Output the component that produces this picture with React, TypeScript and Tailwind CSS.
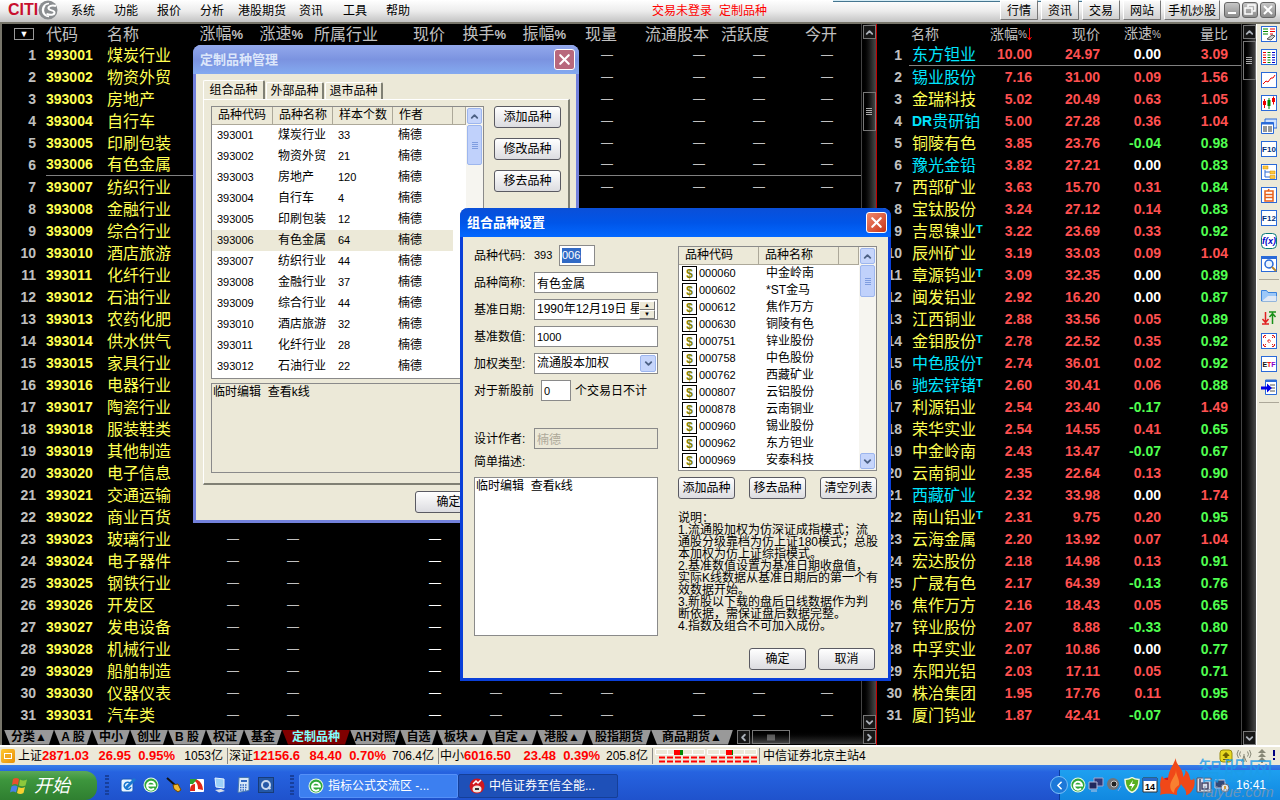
import React from 'react';
import { ChevronDown, ChevronLeft, ChevronRight, ChevronUp, X } from 'lucide-react';

const menus = [
  { name: '系统', w: 'w-[43px]' },
  { name: '功能', w: 'w-[43px]' },
  { name: '报价', w: 'w-[43px]' },
  { name: '分析', w: 'w-[38px]' },
  { name: '港股期货', w: 'w-[61px]' },
  { name: '资讯', w: 'w-[44px]' },
  { name: '工具', w: 'w-[43px]' },
  { name: '帮助', w: 'w-[43px]' },
];

const industries = [
  '煤炭行业', '物资外贸', '房地产', '自行车', '印刷包装', '有色金属', '纺织行业', '金融行业',
  '综合行业', '酒店旅游', '化纤行业', '石油行业', '农药化肥', '供水供气', '家具行业', '电器行业',
  '陶瓷行业', '服装鞋类', '其他制造', '电子信息', '交通运输', '商业百货', '玻璃行业', '电子器件',
  '钢铁行业', '开发区', '发电设备', '机械行业', '船舶制造', '仪器仪表', '汽车类',
];

// name, change %, price, speed %, volume ratio, flags (c = cyan name, t = T mark)
const stocks: [string, string, string, string, string, string][] = [
  ['东方钽业', '10.00', '24.97', '0.00', '3.09', 'c'],
  ['锡业股份', '7.16', '31.00', '0.09', '1.56', 'c'],
  ['金瑞科技', '5.02', '20.49', '0.63', '1.05', ''],
  ['DR贵研铂', '5.00', '27.28', '0.36', '1.04', 'c'],
  ['铜陵有色', '3.85', '23.76', '-0.04', '0.98', ''],
  ['豫光金铅', '3.82', '27.21', '0.00', '0.83', 'c'],
  ['西部矿业', '3.63', '15.70', '0.31', '0.84', ''],
  ['宝钛股份', '3.24', '27.12', '0.14', '0.83', ''],
  ['吉恩镍业', '3.22', '23.69', '0.33', '0.92', 't'],
  ['辰州矿业', '3.19', '33.03', '0.09', '1.04', ''],
  ['章源钨业', '3.09', '32.35', '0.00', '0.89', 't'],
  ['闽发铝业', '2.92', '16.20', '0.00', '0.87', ''],
  ['江西铜业', '2.88', '33.56', '0.05', '0.89', ''],
  ['金钼股份', '2.78', '22.52', '0.35', '0.92', 't'],
  ['中色股份', '2.74', '36.01', '0.02', '0.92', 'ct'],
  ['驰宏锌锗', '2.60', '30.41', '0.06', '0.88', 'ct'],
  ['利源铝业', '2.54', '23.40', '-0.17', '1.49', ''],
  ['荣华实业', '2.54', '14.55', '0.41', '0.65', ''],
  ['中金岭南', '2.43', '13.47', '-0.07', '0.67', ''],
  ['云南铜业', '2.35', '22.64', '0.13', '0.90', ''],
  ['西藏矿业', '2.32', '33.98', '0.00', '1.74', 'c'],
  ['南山铝业', '2.31', '9.75', '0.20', '0.95', 't'],
  ['云海金属', '2.20', '13.92', '0.07', '1.04', ''],
  ['宏达股份', '2.18', '14.98', '0.13', '0.91', ''],
  ['广晟有色', '2.17', '64.39', '-0.13', '0.76', ''],
  ['焦作万方', '2.16', '18.43', '0.05', '0.65', ''],
  ['锌业股份', '2.07', '8.88', '-0.33', '0.80', ''],
  ['中孚实业', '2.07', '10.86', '0.00', '0.77', ''],
  ['东阳光铝', '2.03', '17.11', '0.05', '0.71', ''],
  ['株冶集团', '1.95', '17.76', '0.11', '0.95', ''],
  ['厦门钨业', '1.87', '42.41', '-0.07', '0.66', ''],
];

const sampleCounts = ['33', '21', '120', '4', '12', '64', '44', '37', '44', '32', '28', '22'];

const members = [
  ['000060', '中金岭南'],
  ['000602', '*ST金马'],
  ['000612', '焦作万方'],
  ['000630', '铜陵有色'],
  ['000751', '锌业股份'],
  ['000758', '中色股份'],
  ['000762', '西藏矿业'],
  ['000807', '云铝股份'],
  ['000878', '云南铜业'],
  ['000960', '锡业股份'],
  ['000962', '东方钽业'],
  ['000969', '安泰科技'],
];

const sheetTabs = [
  { name: '分类▲', w: 'w-[50px]' },
  { name: 'A 股', w: 'w-[38px]' },
  { name: '中小', w: 'w-[38px]' },
  { name: '创业', w: 'w-[38px]' },
  { name: 'B 股', w: 'w-[38px]' },
  { name: '权证', w: 'w-[38px]' },
  { name: '基金', w: 'w-[38px]' },
  { name: '定制品种', w: 'w-[68px]', active: true },
  { name: 'AH对照', w: 'w-[50px]' },
  { name: '自选', w: 'w-[37px]' },
  { name: '板块▲', w: 'w-[50px]' },
  { name: '自定▲', w: 'w-[50px]' },
  { name: '港股▲', w: 'w-[50px]' },
  { name: '股指期货', w: 'w-[64px]' },
  { name: '商品期货▲', w: 'w-[82px]' },
];

const ratioColor = (v: string) => (parseFloat(v) >= 1 ? 'text-[#ff5050]' : 'text-[#50ff50]');

const speedColor = (v: string) => {
  if (v === '0.00') return 'text-white';
  return v.startsWith('-') ? 'text-[#50ff50]' : 'text-[#ff5050]';
};

const Logo = () => (
  <div className="flex w-[64px] shrink-0 items-center pl-2">
    <span className="text-base leading-5 font-black text-[#c8102e]">CITI</span>
    <svg viewBox="0 0 20 20" className="size-5 shrink-0" aria-hidden="true">
      <circle cx="10" cy="10" r="9.5" fill="#8a8d90" />
      <path d="M11 3.500a6.500 6.500 0 1 0 0 13M7 5.500a7 7 0 0 0 1 10" fill="none" stroke="#fff" strokeWidth="1.500" />
      <path d="M18 6c-4-1.500-8 .2-7.500 2.500s6 1.500 6 4-4 3-8 1.500" fill="none" stroke="#fff" strokeWidth="2" />
    </svg>
  </div>
);

const MenuBar = () => (
  <header className="relative flex h-6 shrink-0 items-start border-b-2 border-[#77756a] bg-linear-to-b from-white via-[#ececec] to-[#c4c4c4] text-xs">
    <Logo />
    <nav className="flex pl-[7px]">
      {menus.map((m) => (
        <button key={m.name} className={`${m.w} text-left leading-[22px] whitespace-nowrap`}>{m.name}</button>
      ))}
    </nav>
    <div className="flex flex-1 gap-[7px] pl-[223px] leading-[22px] whitespace-nowrap text-[#ff0000]">
      <span>交易未登录</span>
      <span>定制品种</span>
    </div>
    {/* edge of the auto-hidden connection bar */}
    <div className="absolute top-0 right-48 h-0.5 w-[255px] border-b border-[#44758f] bg-[#d5ecf5]" />
    <div className="flex gap-[3px] pr-1">
      {['行情', '资讯', '交易', '网站', '手机炒股'].map((b) => (
        <button
          key={b}
          className={`relative h-5 border border-t-white border-r-[#777] border-b-[#777] border-l-white bg-linear-to-b from-[#fafafa] to-[#d0d0d0] leading-5 whitespace-nowrap ${
            b.length > 2 ? 'px-[3px]' : 'px-[6px]'
          }`}
        >
          {b}
        </button>
      ))}
    </div>
    <div className="flex gap-0.5 pr-1 pt-0.5">
      {['最小化', '还原', '关闭'].map((b, i) => (
        <button key={b} aria-label={b} className="grid size-4 place-items-center rounded-[3px] border border-[#666] bg-linear-to-b from-[#c6c6c6] to-[#8c8c8c]">
          <svg viewBox="0 0 14 14" className="size-3.5" fill="none" stroke="#fff" strokeWidth="2" aria-hidden="true">
            {i === 0 && <path d="M3 10h8" />}
            {i === 1 && <path d="M5 4V2h7v6h-2M2 5h7v6H2z" strokeWidth="1.500" />}
            {i === 2 && <path d="M3 3l8 8M11 3l-8 8" />}
          </svg>
        </button>
      ))}
    </div>
  </header>
);

const DarkBtn = ({ dir }: { dir: 'up' | 'down' | 'left' | 'right' }) => {
  const Icon = { up: ChevronUp, down: ChevronDown, left: ChevronLeft, right: ChevronRight }[dir];
  return (
    <button aria-label={dir} className="grid h-[14px] w-[13px] shrink-0 place-items-center border border-[#777] bg-[#161616] text-[#aab0b8]">
      <Icon size={11} strokeWidth={4} />
    </button>
  );
};

const Grip = () => (
  <span className="flex flex-col gap-px">
    {[0, 1, 2, 3].map((i) => (
      <i key={i} className="block h-px w-1.5 bg-[#aaa]" />
    ))}
  </span>
);

const DarkScroll = ({ offset, thumb }: { offset: string; thumb: string }) => (
  <div className="flex w-[15px] shrink-0 flex-col items-center border-l border-[#444] bg-linear-to-r from-black to-[#4a4a4a] pt-px">
    <DarkBtn dir="up" />
    <div className="flex w-full flex-1 flex-col items-center">
      <div className={offset} />
      <div className={`${thumb} grid w-[13px] place-items-center border border-[#777] bg-linear-to-r from-black to-[#444]`}>
        <Grip />
      </div>
    </div>
    <DarkBtn dir="down" />
  </div>
);

const leftHeads = ['涨幅%', '涨速%', '所属行业', '现价', '换手%', '振幅%', '现量', '流通股本', '活跃度', '今开'];

const IndustryTable = () => (
  <table className="w-full table-fixed border-separate border-spacing-0 text-base whitespace-nowrap text-[#c0c0c0]">
    <colgroup>
      <col className="w-[44px]" />
      <col className="w-[61px]" />
      <col className="w-[76px]" />
      <col className="w-[60px]" />
      <col className="w-[60px]" />
      <col className="w-[75px]" />
      <col className="w-[67px]" />
      <col className="w-[61px]" />
      <col className="w-[60px]" />
      <col className="w-[51px]" />
      <col className="w-[92px]" />
      <col className="w-[60px]" />
      <col className="w-[68px]" />
      <col />
    </colgroup>
    <thead>
      <tr className="h-[19px] leading-[19px]">
        <th className="p-0">
          <button aria-label="筛选" className="ml-3 grid h-3 w-5 place-items-center border border-[#999] text-[9px] leading-none text-white">▼</button>
        </th>
        <th className="p-0 text-left font-normal">代码</th>
        <th className="p-0 text-left font-normal">名称</th>
        {leftHeads.map((h) => (
          <th key={h} className="p-0 text-right font-normal">
            {h.endsWith('%') ? <>{h.slice(0, 2)}<b className="text-[13px]">%</b></> : h}
          </th>
        ))}
        <th className="p-0" />
      </tr>
    </thead>
    <tbody>
      {industries.map((name, i) => {
        const line = i === 5 ? 'border-b border-[#808080]' : '';
        return (
          <tr key={name} className="h-[22px] leading-[21px]">
            <td className="p-0 pr-[10px] text-right text-sm leading-[21px] font-bold">{i + 1}</td>
            <td className={`p-0 text-sm leading-[21px] font-bold text-[#ffff54] ${line}`}>{393001 + i}</td>
            <td className={`p-0 text-[#ffff54] ${line}`}>{name}</td>
            {leftHeads.map((h) => (
              <td key={h} className={`p-0 pr-1 text-right text-xs leading-[21px] ${line} ${h === '现价' ? 'text-white' : ''}`}>
                {h === '所属行业' ? '' : '—'}
              </td>
            ))}
            <td className={`p-0 ${line}`} />
          </tr>
        );
      })}
    </tbody>
  </table>
);

const SheetTabs = () => (
  <div className="flex h-4 items-center pl-0.5">
    {sheetTabs.map((t) => (
      <button
        key={t.name}
        className={`${t.w} h-[15px] shrink-0 overflow-hidden text-xs leading-[15px] font-bold whitespace-nowrap [clip-path:polygon(0_0,100%_0,calc(100%-5px)_100%,6px_100%)] ${
          t.active ? 'bg-[#800000] text-[#80ffff]' : 'bg-[#999] text-black'
        }`}
      >
        {t.name}
      </button>
    ))}
    <div className="ml-1 flex flex-1 items-center gap-0.5 bg-linear-to-b from-black to-[#333]">
      <DarkBtn dir="left" />
      <div className="grid h-[14px] w-[38px] place-items-center border border-[#777] bg-linear-to-b from-black to-[#444]">
        <span className="rotate-90"><Grip /></span>
      </div>
      <div className="flex-1" />
      <DarkBtn dir="right" />
    </div>
  </div>
);

const StockTable = () => (
  <table className="w-full table-fixed border-separate border-spacing-0 text-base whitespace-nowrap">
    <colgroup>
      <col className="w-[32px]" />
      <col className="w-[72px]" />
      <col className="w-[51px]" />
      <col className="w-[68px]" />
      <col className="w-[61px]" />
      <col className="w-[67px]" />
      <col />
    </colgroup>
    <thead>
      <tr className="h-[19px] text-sm leading-[19px] text-[#c0c0c0]">
        <th className="p-0" />
        <th className="p-0 pl-[2px] text-left font-normal">名称</th>
        <th className="p-0 text-right font-normal">
          <span className="flex items-center justify-end">
            涨幅<span className="text-[10px]">%</span>
            <svg viewBox="0 0 5 13" className="h-[13px] w-[5px] shrink-0" aria-hidden="true">
              <path d="M2.500 0v12M.5 9l2 3 2-3" fill="none" stroke="#f00" />
            </svg>
          </span>
        </th>
        <th className="p-0 text-right font-normal">现价</th>
        <th className="p-0 text-right font-normal">涨速<span className="text-[10px]">%</span></th>
        <th className="p-0 text-right font-normal">量比</th>
        <th className="p-0" />
      </tr>
    </thead>
    <tbody>
      {stocks.map(([name, change, price, speed, ratio, flags], i) => {
        const line = i === 0 ? 'border-b border-[#808080]' : '';
        const num = `p-0 text-right text-sm leading-[21px] font-bold ${line}`;
        return (
          <tr key={name} className="h-[22px] leading-[21px]">
            <td className="p-0 pr-[7px] text-right text-sm leading-[21px] font-bold text-[#c0c0c0]">{i + 1}</td>
            <td className={`p-0 pl-[3px] ${line} ${flags.includes('c') ? 'text-[#00e6ff]' : 'text-[#ffff54]'}`}>
              <span className="flex">
                {name.startsWith('DR') ? <><b className="text-sm leading-[21px]">DR</b>{name.slice(2)}</> : name}
                {flags.includes('t') && <b className="text-[11px] leading-4 text-[#00e6ff]">T</b>}
              </span>
            </td>
            <td className={`${num} text-[#ff5050]`}>{change}</td>
            <td className={`${num} text-[#ff5050]`}>{price}</td>
            <td className={`${num} ${speedColor(speed)}`}>{speed}</td>
            <td className={`${num} ${ratioColor(ratio)}`}>{ratio}</td>
            <td className={`p-0 ${line}`} />
          </tr>
        );
      })}
    </tbody>
  </table>
);

const frame = <rect x="0.500" y="0.500" width="15" height="15" fill="#fff" stroke="#2a6ad8" />;

const toolIcons: Record<string, React.ReactNode> = {
  报价牌: <>{frame}<path d="M2 3h5M2 5.500h5M2 8h5" stroke="#080" /><path d="M9 3h5M9 5.500h5M9 8h3" stroke="#e00" /><path d="M6 13l5-4 3 1-4 4z" fill="#ccc" stroke="#555" /></>,
  行情列表: <>{frame}<path d="M2 3.500h3M2 6h3M2 8.500h3M2 11h3M2 13.500h3" stroke="#e00" /><path d="M6.500 3.500h3M6.500 6h3M6.500 8.500h3M6.500 11h3M6.500 13.500h3" stroke="#080" /><path d="M11 3.500h3M11 6h3M11 8.500h3M11 11h3M11 13.500h3" stroke="#00c" /></>,
  分时图: <>{frame}<path d="M2 12l3-3 2 1 3-4h2l2-3" fill="none" stroke="#e00" /></>,
  K线图: <>{frame}<path d="M3.500 4v9M12.500 1.500v8" stroke="#e00" /><path d="M2 6h3v4H2zM11 3h3v4h-3z" fill="#e00" /><path d="M8 3v11" stroke="#080" /><path d="M6.500 5h3v6h-3z" fill="#080" /></>,
  多窗口: <><path d="M4 1h12v9H4z" fill="#cfe2ff" stroke="#2a6ad8" /><path d="M.5 4.500h12v11H.5z" fill="#fff" stroke="#2a6ad8" /><path d="M.5 5.500h12" stroke="#2a6ad8" strokeWidth="2" /><path d="M2 9h4M7 9h4M2 11h4M7 11h4M2 13h4M7 13h4" stroke="#333" /></>,
  F10: <>{frame}<text x="8" y="11" fontSize="8" textAnchor="middle" fontWeight="bold" fill="#003080">F10</text></>,
  树形: <>{frame}<path d="M4 6v7h5M4 8h5" fill="none" stroke="#2a6ad8" /><path d="M2 2h5v3H2zM9 7h5v3H9zM9 11.500h5v3H9z" fill="#ffc83c" stroke="#c80" strokeWidth=".5" /></>,
  自选股: <>{frame}<path d="M4 4h8v10H4z" fill="none" stroke="#e8601c" strokeWidth="1.500" /><path d="M4 7.500h8M4 10.500h8M7 4l1-2" stroke="#e8601c" strokeWidth="1.500" /></>,
  F12: <>{frame}<text x="8" y="11" fontSize="8" textAnchor="middle" fontWeight="bold" fill="#003080">F12</text></>,
  公式: <><rect x=".5" y=".5" width="15" height="15" rx="4" fill="#fff" stroke="#087878" /><text x="8" y="11" fontSize="9" textAnchor="middle" fontStyle="italic" fontWeight="bold" fill="#0000c8">f(x)</text></>,
  查找: <>{frame}<path d="M0 1.500h16" stroke="#2a6ad8" strokeWidth="3" /><circle cx="8" cy="8" r="4" fill="#eaf4ff" stroke="#2a6ad8" strokeWidth="1.500" /><path d="M11 11l4 4" stroke="#b8862c" strokeWidth="2" /></>,
  文件夹: <><path d="M.5 14V3.500h5l1.500 2h8.500V14z" fill="#9cc8f8" stroke="#3a82dc" /><path d="M1 14l6-5h8.500v5z" fill="#dfe8f4" /></>,
  排序: <><path d="M4.500 2v10M1.500 9l3 3.500L7.500 9M1 14h7" fill="none" stroke="#e02020" strokeWidth="1.500" /><path d="M11.500 14V4M8.500 7l3-3.500L14.500 7M8 2h7" fill="none" stroke="#189018" strokeWidth="1.500" /></>,
  扩展: <>{frame}<path d="M2.500 5V2.500H5M11 2.500h2.500V5M2.500 11v2.500H5M13.500 11v2.500H11M5 5L3 3M11 5l2-2M5 11l-2 2M11 11l2 2M8 6v4M6 8h4" fill="none" stroke="#e02020" strokeDasharray="2 1" /></>,
  ETF: <>{frame}<text x="8" y="11" fontSize="7" textAnchor="middle" fontWeight="bold" fill="#111">E<tspan fill="#e00">T</tspan><tspan fill="#80c">F</tspan></text></>,
  退出: <><path d="M4.500 1h11v14.500h-11z" fill="#fff" stroke="#2a6ad8" /><path d="M4 2h12" stroke="#2a6ad8" strokeWidth="2" /><path d="M9 6h5M10 9h4M9 12h5" stroke="#555" /><path d="M0 7.500h6V4.500L11 9l-5 4.500v-3H0z" fill="#0000e8" /></>,
};

const Toolbar = () => (
  <aside className="flex w-6 shrink-0 flex-col items-center gap-[7px] border-l border-white bg-[#ece9d8] pt-[2px]">
    {Object.keys(toolIcons).map((k) => (
      <React.Fragment key={k}>
        <button aria-label={k} className="block size-4">
          <svg viewBox="0 0 16 16" className="size-4" fontFamily="Liberation Sans">{toolIcons[k]}</svg>
        </button>
        {(k === '查找' || k === '退出') && <i className="block h-px w-5 bg-[#aca899]" />}
      </React.Fragment>
    ))}
  </aside>
);

const TitleBar = ({ title, active }: { title: string; active?: boolean }) => (
  <div
    className={`flex h-[29px] items-center justify-between pr-1 pl-[7px] text-[13px] font-bold ${
      active
        ? 'bg-linear-to-b from-[#0a4fd8] via-[#0055e8] to-[#0368ff] text-white'
        : 'bg-linear-to-b from-[#93a9ec] via-[#7b93e0] to-[#84aaf0] text-[#dce6fa]'
    }`}
  >
    <h2 className="leading-[29px]">{title}</h2>
    <button
      aria-label="关闭"
      className={`grid size-[21px] place-items-center rounded-[3px] border border-white text-white ${
        active ? 'bg-linear-to-br from-[#f0886c] to-[#c83010]' : 'bg-[#b8687c]'
      }`}
    >
      <X size={17} strokeWidth={3} />
    </button>
  </div>
);

const XpButton = ({ children, className = '' }: { children: React.ReactNode; className?: string }) => (
  <button className={`h-[22px] rounded-[3px] border border-[#5a5a62] bg-linear-to-b from-white to-[#dcdce0] text-center leading-5 whitespace-nowrap ${className}`}>
    {children}
  </button>
);

const XpScroll = ({ thumb, bottom }: { thumb: string; bottom?: boolean }) => (
  <div className="flex w-[17px] shrink-0 flex-col items-center bg-[#f6f5f0] py-px">
    <button aria-label="上" className="grid h-4 w-[15px] place-items-center rounded-xs border border-[#9db6ee] bg-[#c6d5fb] text-[#4d6185]">
      <ChevronUp size={11} strokeWidth={4} />
    </button>
    <div className={`${thumb} mt-px grid w-[15px] place-items-center rounded-xs border border-[#9db6ee] bg-[#c0d1fb]`}>
      <span className="flex flex-col gap-px">
        {[0, 1, 2, 3].map((i) => (
          <i key={i} className="block h-px w-1.5 bg-[#7f9de0]" />
        ))}
      </span>
    </div>
    <div className="flex-1" />
    {bottom && (
      <button aria-label="下" className="grid h-4 w-[15px] place-items-center rounded-xs border border-[#9db6ee] bg-[#c6d5fb] text-[#4d6185]">
        <ChevronDown size={11} strokeWidth={4} />
      </button>
    )}
  </div>
);

const listHead = 'border-r border-b border-[#aca899] bg-[#ece9d8] p-0 pl-[6px] text-left font-normal';

const ManageDialog = () => (
  <section className="absolute top-[45px] left-[193px] w-[386px] rounded-t-lg border-[3px] border-t-0 border-[#7381dc] bg-[#ece9d8] text-xs">
    <div className="-mx-[3px] overflow-hidden rounded-t-lg">
      <TitleBar title="定制品种管理" />
    </div>
    <div className="px-[7px] pt-[6px] pb-[7px]">
      <div role="tablist" className="flex h-[19px] items-end gap-px">
        {['组合品种', '外部品种', '退市品种'].map((t, i) => (
          <button
            key={t}
            role="tab"
            className={`rounded-t-xs border-t border-r-2 border-l border-t-white border-r-[#808074] border-l-white ${
              i === 0 ? 'h-[19px] w-[62px] leading-4' : 'h-[17px] w-[58px] leading-4'
            }`}
          >
            {t}
          </button>
        ))}
      </div>
      <div className="flex h-[386px] w-[367px] gap-[10px] border-t border-r-2 border-b-2 border-l border-t-white border-r-[#808074] border-b-[#808074] border-l-white pt-[6px] pl-[7px]">
        <div className="flex w-[273px] flex-col gap-1">
          <div className="flex h-[273px] border border-[#8a8a8a] bg-white">
            <table className="flex-1 table-fixed border-separate border-spacing-0 self-start text-left whitespace-nowrap">
              <colgroup>
                <col className="w-[61px]" />
                <col className="w-[60px]" />
                <col className="w-[60px]" />
                <col className="w-[60px]" />
                <col />
              </colgroup>
              <thead>
                <tr className="h-[18px] leading-[17px]">
                  {['品种代码', '品种名称', '样本个数', '作者', ''].map((h) => (
                    <th key={h} className={listHead}>{h}</th>
                  ))}
                </tr>
              </thead>
              <tbody>
                {sampleCounts.map((n, i) => {
                  const bg = i === 5 ? 'bg-[#ece9d8]' : '';
                  return (
                    <tr key={i} className="h-[21px] leading-[21px]">
                      <td className={`p-0 pl-[5px] text-[11px] ${bg}`}>{393001 + i}</td>
                      <td className={`p-0 pl-[5px] ${bg}`}>{industries[i]}</td>
                      <td className={`p-0 pl-[5px] text-[11px] ${bg}`}>{n}</td>
                      <td className={`p-0 pl-[5px] ${bg}`}>楠德</td>
                      <td />
                    </tr>
                  );
                })}
              </tbody>
            </table>
            <XpScroll thumb="h-10" />
          </div>
          <textarea readOnly aria-label="描述" className="block h-[90px] resize-none border border-[#8a8a8a] px-px leading-4" defaultValue="临时编辑  查看k线" />
        </div>
        <div className="flex flex-col gap-[10px]">
          <XpButton className="w-[67px]">添加品种</XpButton>
          <XpButton className="w-[67px]">修改品种</XpButton>
          <XpButton className="w-[67px]">移去品种</XpButton>
        </div>
      </div>
      <XpButton className="mt-[6px] ml-[212px] block w-[67px]">确定</XpButton>
    </div>
  </section>
);

const box = 'h-[21px] border border-[#8a8a8a] bg-white px-0.5 leading-[19px]';

const spin = 'grid h-[9px] place-items-center border border-t-white border-r-[#777] border-b-[#777] border-l-white bg-[#ece9d8] text-[6px] leading-none';

const Field = ({ id, label, children }: { id: string; label: string; children: React.ReactNode }) => (
  <div className="flex h-[27px] items-center">
    <label htmlFor={id} className="w-[60px] shrink-0 whitespace-nowrap">{label}</label>
    {children}
  </div>
);

const notes = [
  '说明：',
  '1.流通股加权为仿深证成指模式；流',
  '通股分级靠档为仿上证180模式；总股',
  '本加权为仿上证综指模式。',
  '2.基准数值设置为基准日期收盘值，',
  '实际K线数据从基准日期后的第一个有',
  '效数据开始。',
  '3.新股以下载的盘后日线数据作为判',
  '断依据，需保证盘后数据完整。',
  '4.指数及组合不可加入成份。',
];

const SettingsDialog = () => (
  <section className="absolute top-[208px] left-[460px] w-[431px] rounded-t-lg border-[3px] border-t-0 border-[#0a3fd8] bg-[#ece9d8] text-xs">
    <div className="-mx-[3px] overflow-hidden rounded-t-lg">
      <TitleBar title="组合品种设置" active />
    </div>
    <div className="flex gap-5 px-[11px] pt-[5px] pb-2">
      <form className="flex w-[185px] flex-col">
        <Field id="code" label="品种代码:">
          <span className="w-[25px] text-[11px]">393</span>
          <span className={`${box} w-9`}>
            <input id="code" defaultValue="006" className="h-[15px] w-[19px] bg-[#316ac5] text-[11px] leading-[15px] text-white" />
          </span>
        </Field>
        <Field id="short" label="品种简称:">
          <input id="short" defaultValue="有色金属" className={`${box} w-full`} />
        </Field>
        <Field id="date" label="基准日期:">
          <span className={`${box} flex w-full items-center`}>
            <input id="date" defaultValue="1990年12月19日 星期三" className="w-full min-w-0" />
            <span className="flex w-4 shrink-0 flex-col">
              <button type="button" aria-label="增加" className={spin}>▲</button>
              <button type="button" aria-label="减少" className={spin}>▼</button>
            </span>
          </span>
        </Field>
        <Field id="base" label="基准数值:">
          <input id="base" defaultValue="1000" className={`${box} w-full text-[11px]`} />
        </Field>
        <Field id="weight" label="加权类型:">
          <span className="relative w-full">
            <select id="weight" className={`${box} block w-full appearance-none`}>
              <option>流通股本加权</option>
            </select>
            <span className="pointer-events-none absolute top-0.5 right-0.5 grid h-[17px] w-4 place-items-center rounded-xs border border-[#9db6ee] bg-[#c6d5fb] text-[#4d6185]">
              <ChevronDown size={11} strokeWidth={4} />
            </span>
          </span>
        </Field>
        <div className="flex h-[27px] items-center whitespace-nowrap">
          <label htmlFor="days" className="w-[67px] shrink-0">对于新股前</label>
          <input id="days" defaultValue="0" className={`${box} mr-1 w-[30px] text-[11px]`} />
          <span>个交易日不计</span>
        </div>
        <div className="h-[21px]" />
        <Field id="author" label="设计作者:">
          <input id="author" disabled defaultValue="楠德" className="h-[21px] w-full border border-[#8a8a8a] bg-[#ece9d8] px-0.5 leading-[19px] text-[#aca899]" />
        </Field>
        <label htmlFor="desc" className="pt-px pb-[5px] leading-[19px]">简单描述:</label>
        <textarea id="desc" defaultValue="临时编辑  查看k线" className="h-[159px] resize-none border border-[#8a8a8a] bg-white px-px leading-4" />
      </form>
      <div className="flex w-[199px] flex-col pt-1">
        <div className="flex h-[225px] border border-[#8a8a8a] bg-white">
          <div className="min-w-0 flex-1">
            <table className="w-full table-fixed border-separate border-spacing-0 text-left whitespace-nowrap">
              <colgroup>
                <col className="w-[80px]" />
                <col className="w-[80px]" />
                <col />
              </colgroup>
              <thead>
                <tr className="h-[18px] leading-[17px]">
                  {['品种代码', '品种名称', ''].map((h) => (
                    <th key={h} className={listHead}>{h}</th>
                  ))}
                </tr>
              </thead>
              <tbody>
                {members.map(([code, name]) => (
                  <tr key={code} className="h-[17px] leading-[17px]">
                    <td className="p-0 pl-[3px]">
                      <span className="flex items-center gap-[2px] text-[11px]">
                        <b className="grid size-[15px] place-items-center border border-black text-xs leading-3 text-[#808000]">$</b>
                        {code}
                      </span>
                    </td>
                    <td className="p-0 pl-[7px]">{name}</td>
                    <td />
                  </tr>
                ))}
              </tbody>
            </table>
          </div>
          <XpScroll thumb="h-8" bottom />
        </div>
        <div className="mt-[6px] flex justify-between">
          <XpButton className="w-[57px]">添加品种</XpButton>
          <XpButton className="w-[57px]">移去品种</XpButton>
          <XpButton className="w-[57px]">清空列表</XpButton>
        </div>
        <div className="mt-[13px] leading-3 whitespace-nowrap">
          {notes.map((n) => (
            <p key={n}>{n}</p>
          ))}
        </div>
        <div className="mt-4 flex justify-end gap-3 pr-0.5">
          <XpButton className="w-[57px]">确定</XpButton>
          <XpButton className="w-[57px]">取消</XpButton>
        </div>
      </div>
    </div>
  </section>
);

const indexes = [
  { name: '上证', value: '2871.03', diff: '26.95', pct: '0.95%', amount: '1053亿', w: 'w-[211px]' },
  { name: '深证', value: '12156.6', diff: '84.40', pct: '0.70%', amount: '706.4亿', w: 'w-[211px]' },
  { name: '中小', value: '6016.50', diff: '23.48', pct: '0.39%', amount: '205.8亿', w: 'w-[214px]' },
];

const Gauge = ({ green }: { green: number }) => (
  <svg viewBox="0 0 50 14" className="h-3.5 w-[50px]" aria-hidden="true">
    <path d="M.5.5h49v5H.5zM12.500.5v5M25.500.5v5M37.500.5v5" fill="none" stroke="#fff" />
    <rect x="19" y="1" width="6" height="5" fill="#f00" />
    <rect x="25" y="1" width={green} height="5" fill="#080" />
    <path d="M4 8.500h46M4 12.500h46" stroke="#f00" strokeWidth="2" strokeDasharray="6 2" />
  </svg>
);

const StatusBar = () => (
  <footer className="flex h-5 shrink-0 items-center border-t-2 border-white bg-[#ece9d8] text-xs whitespace-nowrap">
    <span className="mr-0.5 ml-px grid size-3.5 place-items-center rounded-xs bg-linear-to-br from-[#ffc830] to-[#e89000]">
      <i className="block h-1.5 w-2 border border-white bg-[#f0a820]" />
    </span>
    {indexes.map((ix) => (
      <div key={ix.name} className={`${ix.w} flex h-4 items-center border-r border-[#888] pr-1 pl-px`}>
        <span className="w-6">{ix.name}</span>
        <b className="w-[47px] text-[13px] text-[#f00]">{ix.value}</b>
        <b className="flex-1 text-right text-[13px] text-[#f00]">{ix.diff}</b>
        <b className="w-11 text-right text-[13px] text-[#f00]">{ix.pct}</b>
        <span className="w-[48px] text-right">{ix.amount}</span>
      </div>
    ))}
    <div className="flex h-4 items-center gap-0.5 border-r border-[#888] px-0.5">
      <Gauge green={3} />
      <Gauge green={1} />
    </div>
    <span className="pl-[3px]">中信证券北京主站4</span>
    <div className="ml-auto flex items-center pr-0.5">
      <svg viewBox="0 0 60 16" className="h-4 w-[60px]" aria-hidden="true">
        <rect x="2" y="2" width="12" height="12" rx="3" fill="#e8d820" stroke="#988a10" />
        <path d="M8 4.500l3 3H5zM7 7.500h2v2H7zM5 11.500h6" fill="#706000" stroke="#706000" />
        <path d="M26 6v8M23.500 14l2.500-6 2.500 6M22.500 3.500q-2 3 0 5M29.500 3.500q2 3 0 5M20.500 2q-3 4 0 8M31.500 2q3 4 0 8" fill="none" stroke="#887" />
        <path d="M44 1l4 4h-8zM44 5l4 4h-8zM44 9l4 4h-8zM43 13h2v2h-2z" fill="#887" />
        <path d="M56 2v6M56 10v2" stroke="#000080" strokeWidth="2" />
      </svg>
    </div>
  </footer>
);

const Browser = () => (
  <svg viewBox="0 0 16 16" className="size-4" aria-hidden="true">
    <circle cx="8" cy="8" r="7.500" fill="#e8fbe8" />
    <circle cx="8" cy="8" r="6.500" fill="#2fa83a" />
    <path d="M3.500 8.500h8.500a4 4 0 1 0-1 2.800" fill="none" stroke="#fff" strokeWidth="2" />
  </svg>
);

const quick = [
  <svg key="q1" viewBox="0 0 16 16" className="size-4"><rect x="1" y="2" width="12" height="13" rx="2" fill="#e8f4ff" stroke="#1a5ab8" /><path d="M10 6a3.500 3.500 0 1 0 1 4M6 10l8-8 1 1-8 8z" fill="none" stroke="#1a78d0" strokeWidth="1.500" /></svg>,
  <Browser key="q2" />,
  <svg key="q3" viewBox="0 0 16 16" className="size-4"><path d="M1 1l9 8" stroke="#111" strokeWidth="2" /><path d="M7 8l5-1 3 6-3 2-4-3z" fill="#f0b830" stroke="#704800" /></svg>,
  <svg key="q4" viewBox="0 0 16 16" className="size-4"><rect x="1" y="2" width="14" height="13" rx="1" fill="#fff" /><path d="M1 14c0-4 1-7 5-7v7z" fill="#e02818" /><path d="M6 2c5 1 8 6 8 11l-5-1C9 8 8 5 5 4z" fill="#e02818" /><path d="M1 2h7L4 7H1z" fill="#30a030" /></svg>,
  <svg key="q5" viewBox="0 0 16 16" className="size-4"><path d="M3 1l9 1v9l-8-1z" fill="#9cd0f8" stroke="#e8f4ff" /><path d="M3 13l6-1 4 2-6 1.500z" fill="#d8e0e8" /></svg>,
  <svg key="q6" viewBox="0 0 16 16" className="size-4"><path d="M4 .5h10v13l-11 2z" fill="#d8e8f8" stroke="#4878b0" /><path d="M6 3h6v2H6z" fill="#3068c0" /><path d="M5 8h7M5 10.500h7M5 13h6" stroke="#3068c0" strokeWidth="1.500" strokeDasharray="1.500 1" /></svg>,
  <svg key="q7" viewBox="0 0 16 16" className="size-4"><rect x=".5" y=".5" width="15" height="15" fill="#2458a8" stroke="#183c78" /><circle cx="8" cy="8" r="4" fill="none" stroke="#c8d8f0" strokeWidth="2" /><path d="M10 10l2.500 2" stroke="#c8d8f0" strokeWidth="2" /></svg>,
];

const tray = [
  <Browser key="t1" />,
  <svg key="t2" viewBox="0 0 16 16" className="size-4"><path d="M6 1h9v8H6z" fill="#303878" stroke="#a0a8d0" /><path d="M1 5h8v7H1z" fill="#20285c" stroke="#b0b8d8" /><path d="M3 14h6" stroke="#c0c8e0" /></svg>,
  <svg key="t3" viewBox="0 0 16 16" className="size-4"><circle cx="7" cy="7" r="6" fill="#70747a" /><circle cx="8" cy="7" r="3" fill="#222" stroke="#ccc" /><path d="M12 14l3-5" stroke="#88a8f0" /></svg>,
  <svg key="t4" viewBox="0 0 16 16" className="size-4"><path d="M8 .5c2 1.500 5 2 7 2 0 7-2 11-7 13-5-2-7-6-7-13 2 0 5-.5 7-2z" fill="#58b020" stroke="#f0f8e0" strokeWidth="1.500" /><path d="M9 3L5 9h3l-1 4 4-6H8z" fill="#fff" /></svg>,
  <svg key="t5" viewBox="0 0 16 16" className="size-4"><path d="M1 1h14v14H1z" fill="#fff" stroke="#333" /><path d="M1 2.500h14" stroke="#2868c8" strokeWidth="3" /><text x="3" y="13" fontSize="9" fontWeight="bold" fontFamily="Liberation Sans">14</text></svg>,
  <svg key="t6" viewBox="0 0 16 16" className="size-4"><circle cx="8" cy="8" r="7.500" fill="#d01820" /><path d="M3 7l3-2 2 1 4-3M5 11h6V9H5z" fill="none" stroke="#fff" /></svg>,
  <svg key="t7" viewBox="0 0 16 16" className="size-4" />,
  <svg key="t8" viewBox="0 0 16 16" className="size-4"><path d="M1 1h14v14H1z" fill="#d8dce8" stroke="#556" /><path d="M4 2v12M6 6h6v6H6z" fill="none" stroke="#446" strokeWidth="1.500" /></svg>,
  <svg key="t9" viewBox="0 0 16 16" className="size-4"><path d="M1 3h10v8H1z" fill="#304878" stroke="#ccd" /><circle cx="11" cy="11" r="4" fill="#e0e4ec" stroke="#667" /><path d="M11 9v3" stroke="#c80" strokeWidth="1.500" /></svg>,
];

const Taskbar = () => (
  <div className="relative flex h-[35px] shrink-0 items-end bg-linear-to-b from-[#3a80e8] via-[#2663e0] via-20% to-[#1f52cc] text-xs text-white">
    <button className="flex h-[29px] w-[97px] items-center gap-1.5 rounded-r-xl bg-linear-to-b from-[#5aa858] via-[#3d963d] via-30% to-[#2f7f30] pl-[10px] text-lg leading-6 italic">
      <svg viewBox="0 0 18 18" className="size-[18px]" aria-hidden="true">
        <path d="M3 2q3-2 6 0L8 8Q5 6 2 8z" fill="#e8502c" />
        <path d="M10 2.500q3 2 7 0L15.500 8.500q-3 1.500-6.500 0z" fill="#8cc83c" />
        <path d="M1.500 9.500q3-2 6 0l-1.500 6q-3-2-6 0z" fill="#4880e8" />
        <path d="M8.500 10q3 2 6.500 0l-1.500 6q-3 2-6.500 0z" fill="#f8d030" />
      </svg>
      <span>开始</span>
    </button>
    <div className="flex h-[30px] items-center gap-[7px] pl-2">
      <i className="mr-1 block h-5 w-1 border-x-2 border-dotted border-[#173f9c]" />
      {quick}
      <i className="ml-[9px] block h-5 w-1 border-x-2 border-dotted border-[#173f9c]" />
    </div>
    <button className="mb-[2px] ml-[5px] flex h-6 w-[159px] items-center gap-1 rounded-xs border border-[#5590f8] bg-[#3c7ff0] pl-[8px] whitespace-nowrap">
      <Browser />
      指标公式交流区 -...
    </button>
    <button className="mb-[2px] flex h-6 w-[160px] items-center gap-1 rounded-xs border border-[#153f98] bg-[#1e50b8] pl-[10px] whitespace-nowrap">
      <svg viewBox="0 0 16 16" className="size-4" aria-hidden="true">
        <circle cx="8" cy="8" r="7.500" fill="#d01820" />
        <path d="M4 6l3-3 2 2 3-3" fill="none" stroke="#fff" strokeWidth="1.500" />
        <ellipse cx="8" cy="11" rx="4.500" ry="3.500" fill="#f0e8e0" />
        <path d="M6 11h4" stroke="#333" strokeWidth="2" />
      </svg>
      中信证券至信全能...
    </button>
    <div className="ml-auto flex h-[30px] w-[221px] items-center gap-0.5 border-l border-[#0c3c9c] bg-linear-to-b from-[#1ea0f0] to-[#1188e0]">
      <button aria-label="展开" className="-ml-[10px] grid size-[18px] shrink-0 place-items-center rounded-full border border-[#7cc0f8] bg-[#1c78d8]">
        <ChevronLeft size={13} strokeWidth={3} />
      </button>
      {tray}
      <time className="ml-1 whitespace-nowrap">16:41</time>
    </div>
    <div className="pointer-events-none absolute right-0 bottom-0 flex h-[42px] w-[120px]">
      <svg viewBox="0 0 36 38" className="h-[38px] w-9 shrink-0" aria-hidden="true">
        <path d="M16 0c-1 7 8 10 7 19 2-2 3-4 2-7 6 4 4 9 6 10 2 0 3-1 3-2 3 10-5 17-8 17 1-6-3-7-5-11-1 4-5 5-4 11-6-1-10-2-17 0C2 31-2 27 2 18c2 3 3 4 6 4 0-9 5-14 8-22z" fill="#f04818" />
        <path d="M16 12c0 6 4 9 3 15-3 2-5 4-5 8-4-2-5-8-2-13 2-4 4-6 4-10z" fill="#f88030" />
      </svg>
      <div className="flex flex-col whitespace-nowrap">
        <span className="pl-0.5 text-[25px] leading-[26px] text-[#1c9ce8]/80">智股网</span>
        <span className="pl-1.5 text-[15px] leading-4 text-[#8098b0]/80 italic">laiyue.com</span>
      </div>
    </div>
  </div>
);

const App: React.FC = () => (
  <div className="relative flex min-h-screen flex-col overflow-hidden bg-black font-['Liberation_Sans','Noto_Sans_CJK_SC',sans-serif] text-black">
    <MenuBar />
    <main className="flex flex-1">
      <div className="flex min-w-0 flex-1 flex-col border-r border-l-2 border-r-[#c00000] border-l-[#77756a]">
        <div className="flex flex-1 items-stretch">
          <div className="min-w-0 flex-1"><IndustryTable /></div>
          <DarkScroll offset="h-[53px]" thumb="h-[39px]" />
        </div>
        <SheetTabs />
      </div>
      <div className="flex w-[379px] shrink-0">
        <div className="min-w-0 flex-1"><StockTable /></div>
        <DarkScroll offset="h-0.5" thumb="h-[39px]" />
      </div>
      <Toolbar />
    </main>
    <StatusBar />
    <Taskbar />
    <ManageDialog />
    <SettingsDialog />
  </div>
);

export default App;
